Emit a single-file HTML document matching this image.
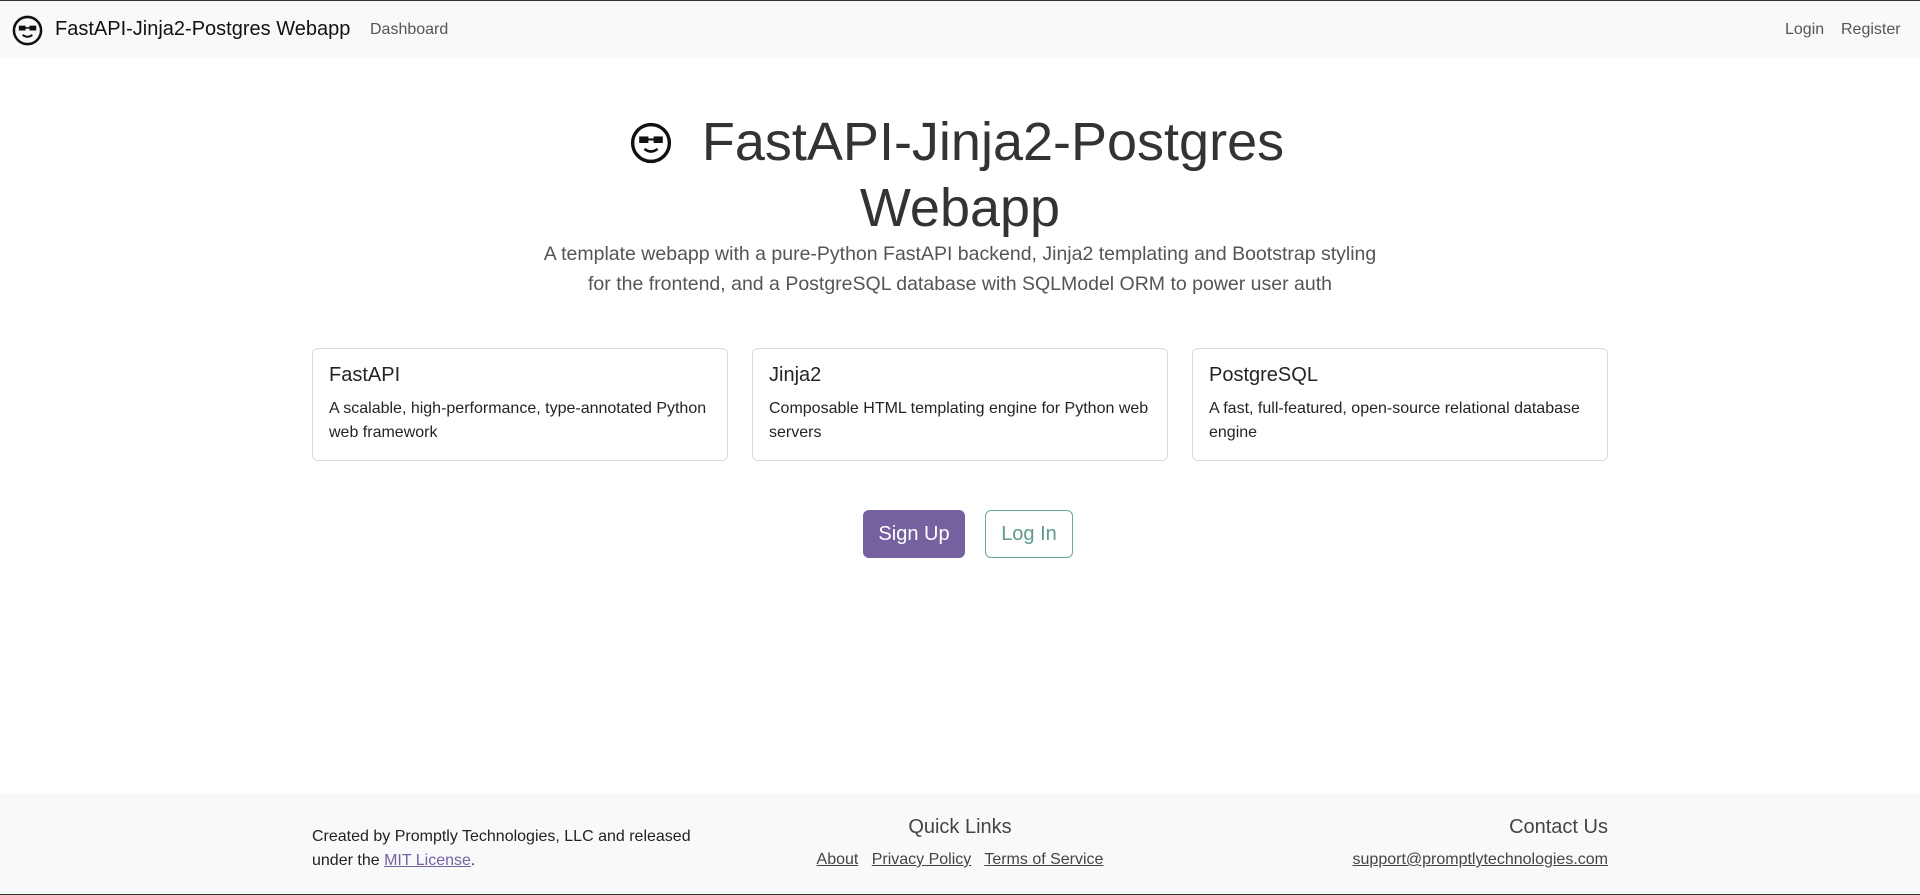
<!DOCTYPE html>
<html><head><meta charset="utf-8"><style>
*{box-sizing:border-box;margin:0;padding:0}
html,body{width:1920px;height:895px;overflow:hidden}
body{font-family:"Liberation Sans",sans-serif;color:#212529;background:#fff;position:relative;border-top:1px solid #333;border-bottom:2px solid #333}
.nav{position:absolute;top:0;left:0;width:1920px;height:56px;background:#f8f9fa}
.abs{position:absolute;white-space:nowrap}
a{color:inherit}
.card{position:absolute;top:347px;width:416px;height:113px;border:1px solid #d8dadd;border-radius:6px;padding:13px 16px}
.card h5{font-size:20px;font-weight:500;margin-top:2px;margin-bottom:10px}
.card p{font-size:16px;line-height:24px}
.foot{position:absolute;top:792px;left:0;width:1920px;height:101px;background:#f8f9fa}
</style></head><body>
<div class="nav">
<svg class="abs" style="left:12px;top:14px" width="31" height="31" viewBox="0 0 32 32"><circle cx="16" cy="16" r="14" fill="none" stroke="#111" stroke-width="2.6"/><rect x="7" y="11" width="7" height="5" fill="#111"/><rect x="18" y="11" width="7" height="5" fill="#111"/><rect x="13" y="12.5" width="6" height="1.6" fill="#111"/><path d="M11 20.5q5 4 10 0" fill="none" stroke="#111" stroke-width="2"/></svg>
<div class="abs" style="left:55px;top:17px;font-size:20px;color:#111">FastAPI-Jinja2-Postgres Webapp</div>
<div class="abs" style="left:370px;top:20px;font-size:16px;color:#555">Dashboard</div>
<div class="abs" style="left:1785px;top:20px;font-size:16px;color:#555">Login</div>
<div class="abs" style="left:1841px;top:20px;font-size:16px;color:#555">Register</div>
</div>
<svg class="abs" style="left:630px;top:121px" width="42" height="42" viewBox="0 0 32 32"><circle cx="16" cy="16" r="14" fill="none" stroke="#111" stroke-width="2.6"/><rect x="7" y="11" width="7" height="5" fill="#111"/><rect x="18" y="11" width="7" height="5" fill="#111"/><rect x="13" y="12.5" width="6" height="1.6" fill="#111"/><path d="M11 20.5q5 4 10 0" fill="none" stroke="#111" stroke-width="2"/></svg>
<div class="abs" style="left:698px;top:108px;width:590px;text-align:center;font-size:54px;line-height:66px;color:#333">FastAPI-Jinja2-Postgres</div>
<div class="abs" style="left:660px;top:174px;width:600px;text-align:center;font-size:54px;line-height:66px;color:#333">Webapp</div>
<div class="abs" style="left:460px;top:238px;width:1000px;text-align:center;font-size:19.5px;line-height:30px;color:#555">A template webapp with a pure-Python FastAPI backend, Jinja2 templating and Bootstrap styling<br>for the frontend, and a PostgreSQL database with SQLModel ORM to power user auth</div>
<div class="card" style="left:312px"><h5>FastAPI</h5><p>A scalable, high-performance, type-annotated Python web framework</p></div>
<div class="card" style="left:752px"><h5>Jinja2</h5><p>Composable HTML templating engine for Python web servers</p></div>
<div class="card" style="left:1192px"><h5>PostgreSQL</h5><p>A fast, full-featured, open-source relational database engine</p></div>
<div class="abs" style="left:863px;top:509px;width:102px;height:48px;background:#7561a0;border-radius:6px;color:#fff;font-size:20px;line-height:48px;text-align:center">Sign Up</div>
<div class="abs" style="left:985px;top:509px;width:88px;height:48px;border:1px solid #6aa89c;border-radius:6px;color:#5f9a8f;font-size:20px;line-height:46px;text-align:center">Log In</div>
<div class="foot">
<div class="abs" style="left:312px;top:32px;font-size:16px;line-height:24px;color:#222">Created by Promptly Technologies, LLC and released<br>under the <a style="color:#7561a0" href="#">MIT License</a>.</div>
<div class="abs" style="left:760px;top:23px;width:400px;text-align:center;font-size:20px;font-weight:500;color:#444">Quick Links</div>
<div class="abs" style="left:760px;top:58px;width:400px;text-align:center;font-size:16px;color:#444"><a href="#">About</a>&nbsp;&nbsp; <a href="#">Privacy Policy</a>&nbsp;&nbsp; <a href="#">Terms of Service</a></div>
<div class="abs" style="right:312px;top:23px;font-size:20px;font-weight:500;color:#444">Contact Us</div>
<div class="abs" style="right:312px;top:58px;font-size:16px;color:#444"><a href="#">support@promptlytechnologies.com</a></div>
</div>
</body></html>
